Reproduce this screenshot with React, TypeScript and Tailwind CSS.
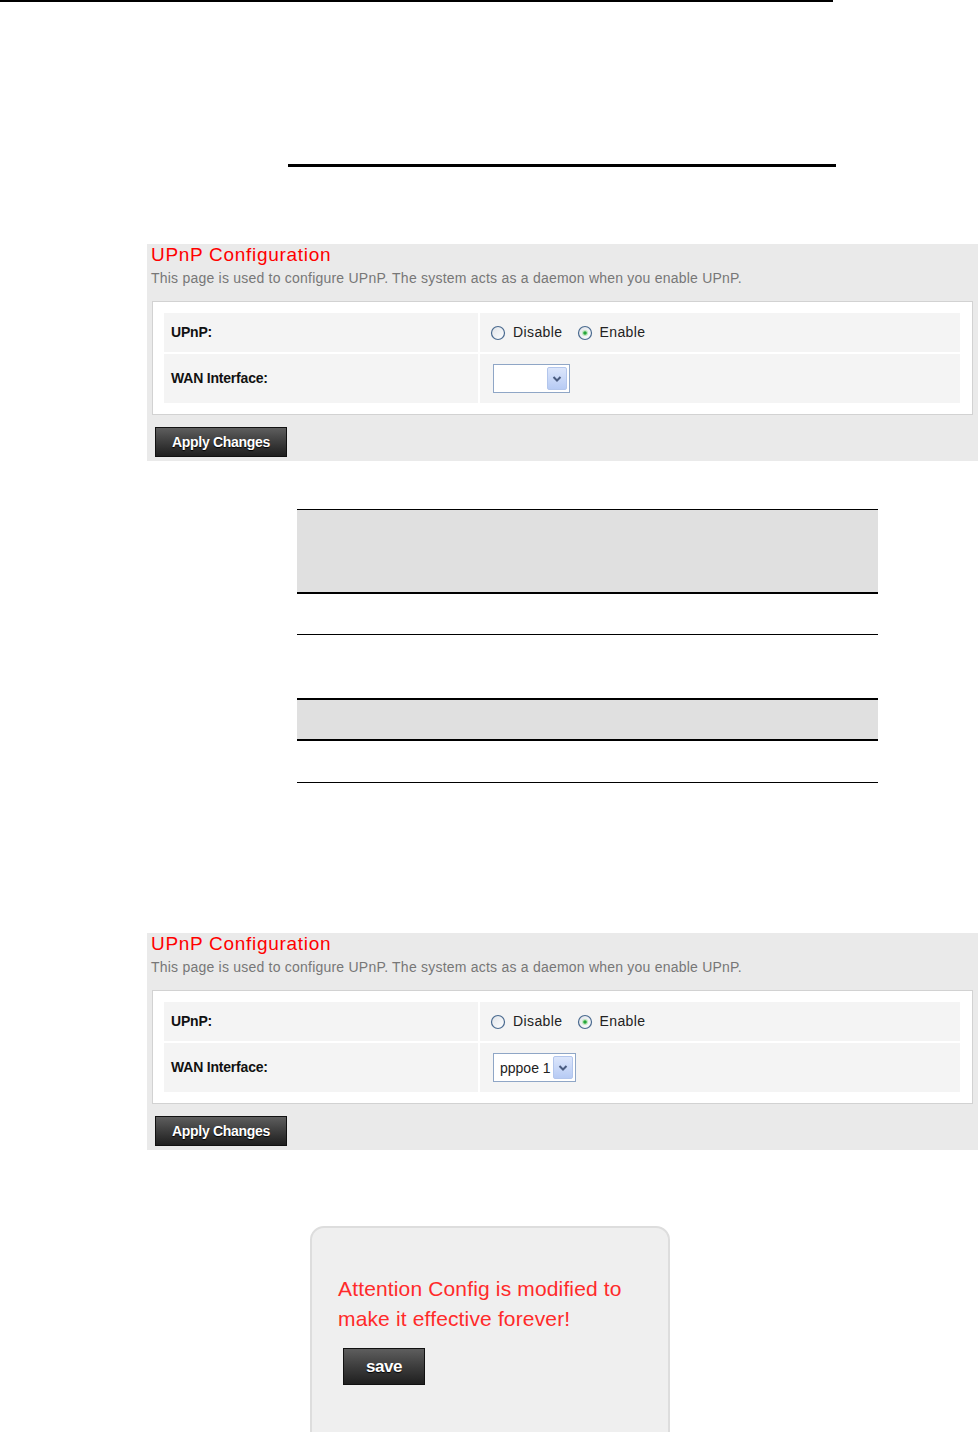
import React from 'react';

const Radio = ({ checked }: { checked?: boolean }) => (
  <svg width="16" height="16" viewBox="0 0 16 16" className="shrink-0">
    <defs>
      <linearGradient id={checked ? 'rg-on' : 'rg-off'} x1="0" y1="0" x2="1" y2="1">
        <stop offset="0" stopColor="#dfe3e8" />
        <stop offset="1" stopColor="#ffffff" />
      </linearGradient>
    </defs>
    <circle cx="8" cy="8" r="6.5" fill={`url(#${checked ? 'rg-on' : 'rg-off'})`} stroke="#4a6a8f" strokeWidth="1.2" />
    {checked && (
      <>
        <circle cx="8" cy="8" r="3" fill="#bfe8bf" />
        <circle cx="8" cy="8" r="1.8" fill="#26a63a" />
      </>
    )}
  </svg>
);

const SelectBox = ({ value, width }: { value: string; width: string }) => (
  <div className={`flex h-[29px] items-center justify-between border border-[#8fa6c6] bg-white pl-[6px] pr-[2px] ${width}`}>
    <span className="text-[14px] leading-none text-[#222]">{value}</span>
    <span className="flex h-[23px] w-[20px] items-center justify-center rounded-[2px] border border-[#b3c6ec] bg-gradient-to-b from-[#dce6fb] to-[#b7cbf4]">
      <svg width="10" height="8" viewBox="0 0 10 8">
        <path d="M1.5 2 L5 5.5 L8.5 2" fill="none" stroke="#4a5c80" strokeWidth="2" />
      </svg>
    </span>
  </div>
);

const DarkButton = ({ label, className }: { label: string; className: string }) => (
  <button
    className={`flex items-center justify-center border border-[#111] bg-gradient-to-b from-[#5e5e5e] to-[#1f1f1f] font-bold text-white [text-shadow:0_1px_1px_#000] ${className}`}
  >
    {label}
  </button>
);

const UpnpPanel = ({ wan, selectWidth, className }: { wan: string; selectWidth: string; className: string }) => (
  <div className={`ml-[147px] h-[217px] w-[831px] bg-[#eaeaea] ${className}`}>
    <div className="pl-[4px] text-[19px] leading-[22px] tracking-[0.7px] text-[#ff0000]">UPnP Configuration</div>
    <div className="mt-[4px] pl-[4px] text-[14px] leading-[16px] tracking-[0.22px] text-[#777]">
      This page is used to configure UPnP. The system acts as a daemon when you enable UPnP.
    </div>

    {/* settings table */}
    <div className="ml-[5px] mt-[15px] h-[114px] w-[821px] border border-[#d2d2d2] bg-white px-[11px] pt-[11px]">
      <div className="flex flex-col gap-[2px]">
        <div className="flex h-[39px] gap-[2px]">
          <div className="flex w-[314px] items-center bg-[#f4f4f4] pl-[7px] text-[14px] font-bold tracking-[-0.2px] text-[#111]">UPnP:</div>
          <div className="flex w-[480px] items-center bg-[#f4f4f4] pl-[10px] text-[14px] tracking-[0.4px] text-[#222]">
            <Radio />
            <span className="ml-[7px]">Disable</span>
            <span className="ml-[14px]"><Radio checked /></span>
            <span className="ml-[7px]">Enable</span>
          </div>
        </div>
        <div className="flex h-[49px] gap-[2px]">
          <div className="flex w-[314px] items-center bg-[#f4f4f4] pl-[7px] text-[14px] font-bold tracking-[-0.2px] text-[#111]">WAN Interface:</div>
          <div className="flex w-[480px] items-center bg-[#f4f4f4] pl-[13px]">
            <SelectBox value={wan} width={selectWidth} />
          </div>
        </div>
      </div>
    </div>

    <DarkButton label="Apply Changes" className="ml-[8px] mt-[12px] h-[30px] w-[132px] text-[14px] tracking-[-0.3px]" />
  </div>
);

export default function App() {
  return (
    <div className="h-[1432px] w-[978px] overflow-hidden bg-white font-['Liberation_Sans',Arial,sans-serif]">
      <div className="h-[2px] w-[833px] bg-black" />
      <div className="ml-[288px] mt-[162px] h-[3px] w-[548px] bg-black" />

      <UpnpPanel wan="" selectWidth="w-[77px]" className="mt-[77px]" />

      {/* empty table */}
      <div className="ml-[297px] mt-[48px] w-[581px]">
        <div className="h-[1px] bg-black" />
        <div className="h-[82px] bg-[#e0e0e0]" />
        <div className="h-[2px] bg-black" />
        <div className="h-[40px]" />
        <div className="h-[1px] bg-black" />
        <div className="h-[63px]" />
        <div className="h-[2px] bg-black" />
        <div className="h-[39px] bg-[#e0e0e0]" />
        <div className="h-[2px] bg-black" />
        <div className="h-[41px]" />
        <div className="h-[1px] bg-black" />
      </div>

      <UpnpPanel wan="pppoe 1" selectWidth="w-[83px]" className="mt-[150px]" />

      {/* save prompt */}
      <div className="ml-[310px] mt-[76px] h-[230px] w-[360px] rounded-[14px] border-2 border-[#dddddd] bg-[#efefef] pl-[26px] pt-[46px]">
        <div className="text-[21px] leading-[30px] tracking-[0.15px] text-[#ff2a2a]">
          Attention Config is modified to
          <br />
          make it effective forever!
        </div>
        <DarkButton label="save" className="ml-[5px] mt-[14px] h-[37px] w-[82px] text-[17px] tracking-[-0.5px]" />
      </div>
    </div>
  );
}
